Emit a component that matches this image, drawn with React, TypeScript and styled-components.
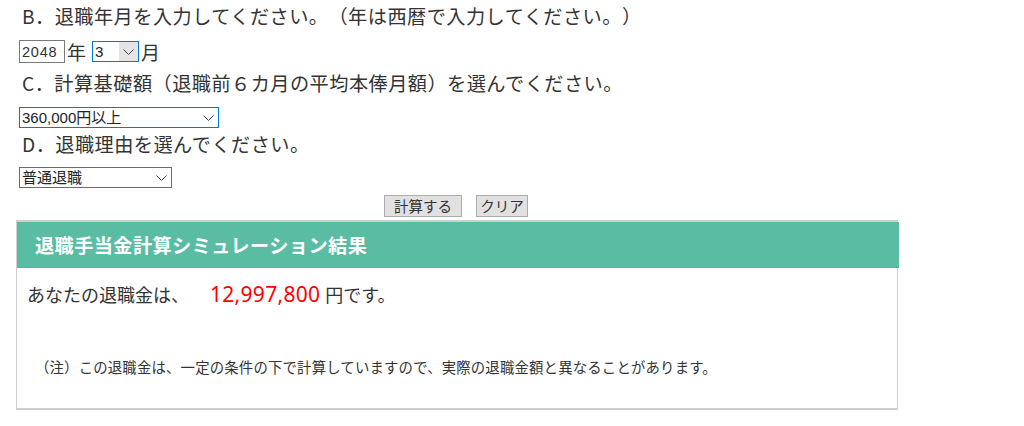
import React from 'react';
import styled, { createGlobalStyle } from 'styled-components';

const GlobalStyle = createGlobalStyle`
  html, body {
    margin: 0;
    padding: 0;
    background: #fff;
  }
  body {
    font-family: "Noto Sans CJK JP", "Liberation Sans", sans-serif;
    color: #333;
    text-spacing-trim: space-all;
  }
`;

const Page = styled.div`
  width: 882px;
  margin-left: 16px;
  padding-top: 2px;
`;

const Question = styled.p<{ top?: number }>`
  margin: ${p => p.top ?? 0}px 0 0 6px;
  font-size: 19.2px;
  line-height: 28px;
  letter-spacing: 0.45px;
  color: #333;
`;

const ControlRow = styled.div<{ top?: number }>`
  display: flex;
  align-items: center;
  margin: ${p => p.top ?? 0}px 0 0 3px;
  height: 23px;
  font-size: 19px;
  color: #333;
`;

const Unit = styled.span<{ gap?: number }>`
  margin: 0 ${p => p.gap ?? 0}px 0 2px;
  line-height: 23px;
`;

const YearInput = styled.input`
  box-sizing: border-box;
  width: 46px;
  height: 23px;
  padding: 0 2px;
  border: 1px solid #7a7a7a;
  font-family: "Liberation Sans", sans-serif;
  font-size: 14.5px;
  letter-spacing: 0.8px;
  color: #333;
  outline: none;
`;

const SelectWrap = styled.span<{ w: number }>`
  position: relative;
  display: flex;
  width: ${p => p.w}px;
  height: 21px;
`;

const Select = styled.select<{ focused?: boolean }>`
  appearance: none;
  display: block;
  box-sizing: border-box;
  width: 100%;
  height: 100%;
  margin: 0;
  padding: 0 0 0 2px;
  border: 1px solid ${p => (p.focused ? '#0078d7' : '#6b6b6b')};
  border-radius: 0;
  background: #fff;
  font-family: "Liberation Sans", "Noto Sans CJK JP", sans-serif;
  font-size: 15px;
  line-height: 19px;
  color: #222;
  outline: none;
`;

const Chevron = styled.span<{ shaded?: boolean }>`
  position: absolute;
  top: 1px;
  right: 1px;
  bottom: 1px;
  width: 19px;
  display: flex;
  align-items: center;
  justify-content: center;
  background: ${p => (p.shaded ? '#e5e5e5' : 'transparent')};
  pointer-events: none;
`;

const ButtonRow = styled.div`
  display: flex;
  justify-content: center;
  gap: 14px;
  margin-top: 6px;
  padding-right: 2px;
`;

const Button = styled.button<{ w: number }>`
  box-sizing: border-box;
  width: ${p => p.w}px;
  height: 22px;
  padding: 0;
  border: 1px solid #adadad;
  border-radius: 0;
  background: #e1e1e1;
  font-family: "Noto Sans CJK JP", sans-serif;
  font-size: 14.5px;
  line-height: 20px;
  color: #333;
`;

const ResultBox = styled.section`
  margin-top: 3px;
  border: 1px solid #cfcfcf;
  border-top-width: 2px;
  border-bottom-width: 2px;
`;

const ResultHeader = styled.h2`
  margin: 0 -2px 0 0;
  height: 46px;
  padding-left: 18px;
  display: flex;
  align-items: center;
  background: #5abda3;
  border-bottom: 1px solid #4fb898;
  box-sizing: border-box;
  font-size: 19.2px;
  font-weight: bold;
  letter-spacing: 0.4px;
  color: #fff;
`;

const ResultBody = styled.div`
  padding: 12px 10px 30px 10px;
`;

const Amount = styled.p`
  margin: 0;
  font-size: 18px;
  line-height: 28px;
  color: #333;
`;

const Money = styled.span`
  margin: 0 5px 0 21px;
  color: #ff0000;
  font-family: "Noto Sans", "Noto Sans CJK JP", sans-serif;
  font-size: 21px;
  letter-spacing: 0.3px;
`;

const Note = styled.p`
  margin: 48px 0 0 8px;
  font-size: 14.4px;
  line-height: 22px;
  letter-spacing: 0.17px;
  color: #333;
`;

const ChevronIcon: React.FC = () => (
  <svg width="11" height="6" viewBox="0 0 11 6">
    <path d="M0.5 0.5 L5.5 5.5 L10.5 0.5" fill="none" stroke="#444" strokeWidth="1" />
  </svg>
);

const App: React.FC = () => {
  return (
    <Page>
      <GlobalStyle />
      <Question>B．退職年月を入力してください。（年は西暦で入力してください。）</Question>
      <ControlRow top={10}>
        <YearInput defaultValue="2048" />
        <Unit gap={6}>年</Unit>
        <SelectWrap w={47}>
          <Select focused defaultValue="3">
            {Array.from({ length: 12 }, (_, i) => (
              <option key={i} value={String(i + 1)}>{i + 1}</option>
            ))}
          </Select>
          <Chevron shaded><ChevronIcon /></Chevron>
        </SelectWrap>
        <Unit>月</Unit>
      </ControlRow>
      <Question top={6}>C．計算基礎額（退職前６カ月の平均本俸月額）を選んでください。</Question>
      <ControlRow top={9}>
        <SelectWrap w={200}>
          <Select focused defaultValue="360000">
            <option value="360000">360,000円以上</option>
          </Select>
          <Chevron><ChevronIcon /></Chevron>
        </SelectWrap>
      </ControlRow>
      <Question top={1}>D．退職理由を選んでください。</Question>
      <ControlRow top={8}>
        <SelectWrap w={153}>
          <Select defaultValue="normal">
            <option value="normal">普通退職</option>
          </Select>
          <Chevron><ChevronIcon /></Chevron>
        </SelectWrap>
      </ControlRow>
      <ButtonRow>
        <Button w={78}>計算する</Button>
        <Button w={52}>クリア</Button>
      </ButtonRow>
      <ResultBox>
        <ResultHeader>退職手当金計算シミュレーション結果</ResultHeader>
        <ResultBody>
          <Amount>
            あなたの退職金は、<Money>12,997,800</Money>円です。
          </Amount>
          <Note>（注）この退職金は、一定の条件の下で計算していますので、実際の退職金額と異なることがあります。</Note>
        </ResultBody>
      </ResultBox>
    </Page>
  );
};

export default App;
